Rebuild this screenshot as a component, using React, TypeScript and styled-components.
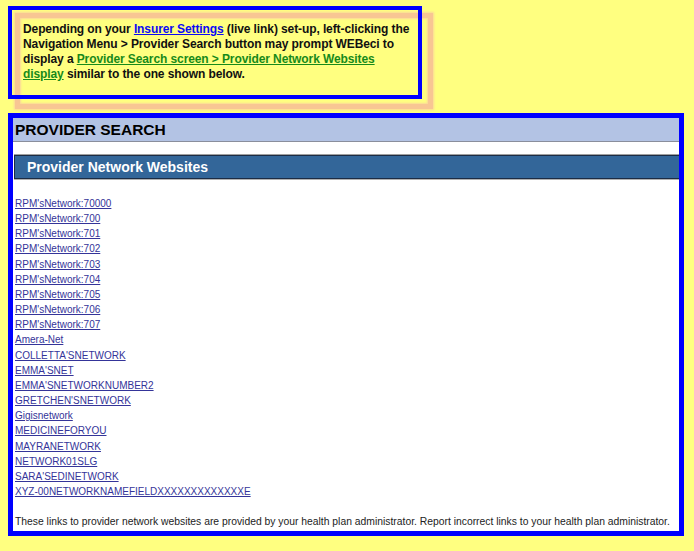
import styled, { createGlobalStyle } from "styled-components";

const GlobalStyle = createGlobalStyle`
  html {
    background: #ffff80;
  }
  body {
    margin: 0;
    padding: 0;
    font-family: "Liberation Sans", Arial, sans-serif;
  }
`;

const Page = styled.div`
  padding: 6px 0 0 8px;
`;

const Callout = styled.div`
  position: relative;
  box-sizing: border-box;
  width: 414px;
  height: 93px;
  border: 4px solid #0000ff;
  padding: 12px 0 0 11px;
  font-size: 12px;
  font-weight: bold;
  line-height: 15px;
  letter-spacing: -0.1px;
  color: #111;
  white-space: nowrap;

  &::before {
    content: "";
    position: absolute;
    left: 3px;
    top: 3px;
    right: -15px;
    bottom: -14px;
    border: 5px solid #f8c693;
    box-shadow: 0 0 2px 1px #fbd79a, inset 0 0 2px 1px #fbd79a;
    z-index: -1;
  }
`;

const TextLink = styled.a<{ $tone: "blue" | "green" }>`
  color: ${(p) => (p.$tone === "blue" ? "#0a0af5" : "#178a1a")};
  text-decoration: underline;
`;

const Panel = styled.div`
  box-sizing: border-box;
  width: 676px;
  height: 423px;
  margin-top: 14px;
  border: 5px solid #0000ff;
  background: #ffffff;
  display: flex;
  flex-direction: column;
`;

const PanelHeader = styled.div`
  height: 23px;
  background: #b3c3e4;
  border-bottom: 1px solid #8a8e9c;
  padding-left: 2px;
  font-size: 15.5px;
  font-weight: bold;
  line-height: 23px;
  color: #000;
`;

const SectionBar = styled.div`
  margin: 13px 0 0 1px;
  height: 22px;
  background: #336699;
  border: 1px solid #1c2c44;
  border-right: none;
  box-shadow: 0 -1px 0 #a0a0a0, 0 1px 0 #b0b0b0;
  padding-left: 12px;
  font-size: 14px;
  font-weight: bold;
  line-height: 22px;
  color: #fff;
`;

const LinkList = styled.ul`
  list-style: none;
  margin: 17px 0 0;
  padding: 0 0 0 2px;
`;

const NetworkLink = styled.li`
  font-size: 10px;
  line-height: 15.15px;

  a {
    color: #343499;
    text-decoration: underline;
  }
`;

const Footnote = styled.p`
  margin: 15px 0 0;
  padding-left: 2px;
  font-size: 10.35px;
  line-height: 15px;
  color: #222;
  white-space: nowrap;
`;

const networks = [
  "RPM'sNetwork:70000",
  "RPM'sNetwork:700",
  "RPM'sNetwork:701",
  "RPM'sNetwork:702",
  "RPM'sNetwork:703",
  "RPM'sNetwork:704",
  "RPM'sNetwork:705",
  "RPM'sNetwork:706",
  "RPM'sNetwork:707",
  "Amera-Net",
  "COLLETTA'SNETWORK",
  "EMMA'SNET",
  "EMMA'SNETWORKNUMBER2",
  "GRETCHEN'SNETWORK",
  "Gigisnetwork",
  "MEDICINEFORYOU",
  "MAYRANETWORK",
  "NETWORK01SLG",
  "SARA'SEDINETWORK",
  "XYZ-00NETWORKNAMEFIELDXXXXXXXXXXXXXE",
];

export default function App() {
  return (
    <>
      <GlobalStyle />
      <Page>
        <Callout>
          Depending on your <TextLink $tone="blue" href="#">Insurer Settings</TextLink> (live link) set-up, left-clicking the
          <br />
          Navigation Menu &gt; Provider Search button may prompt WEBeci to
          <br />
          display a <TextLink $tone="green" href="#">Provider Search screen &gt; Provider Network Websites </TextLink>
          <br />
          <TextLink $tone="green" href="#">display</TextLink> similar to the one shown below.
        </Callout>
        <Panel>
          <PanelHeader>PROVIDER SEARCH</PanelHeader>
          <SectionBar>Provider Network Websites</SectionBar>
          <LinkList>
            {networks.map((name) => (
              <NetworkLink key={name}>
                <a href="#">{name}</a>
              </NetworkLink>
            ))}
          </LinkList>
          <Footnote>
            These links to provider network websites are provided by your health plan administrator. Report incorrect links to your health plan administrator.
          </Footnote>
        </Panel>
      </Page>
    </>
  );
}
